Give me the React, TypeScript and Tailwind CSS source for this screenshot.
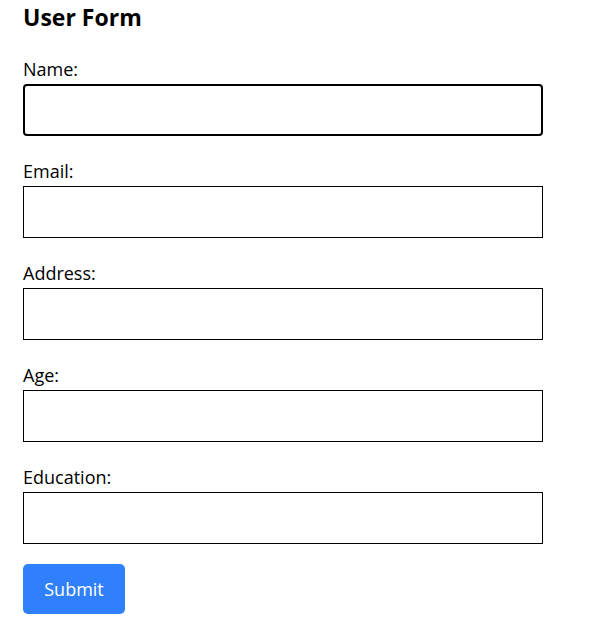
const fields = ['Name', 'Email', 'Address', 'Age', 'Education'];

export default function App() {
  return (
    <div className="min-h-screen bg-white px-[23px] text-black" style={{ fontFamily: '"Open Sans", "Noto Sans", sans-serif' }}>
      <h2 className="pt-[1px] text-[23px] font-bold leading-[32px]">User Form</h2>
      <form className="mt-[27px] flex flex-col" onSubmit={(e) => e.preventDefault()}>
        {fields.map((f, i) => (
          <div key={f} className="mb-[26px]">
            <label className="mb-[5px] block text-[18px] leading-[19px]">{f}:</label>
            <input
              type="text"
              className={
                i === 0
                  ? 'block h-[52px] w-[520px] rounded-[4px] border-2 border-black bg-white px-2 outline-none'
                  : 'block h-[52px] w-[520px] border border-black bg-white px-2 outline-none'
              }
            />
          </div>
        ))}
        <div className="-mt-[6px]">
          <button type="submit" className="h-[50px] w-[102px] rounded-[5px] bg-[#2f80fa] text-[18px] text-white">
            Submit
          </button>
        </div>
      </form>
    </div>
  );
}
